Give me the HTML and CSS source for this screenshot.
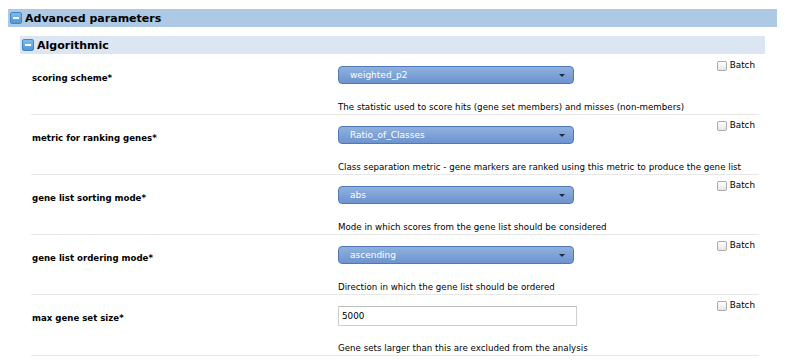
FILE: index.html
```html
<!DOCTYPE html>
<html>
<head>
<meta charset="utf-8">
<title>Advanced parameters</title>
<link rel="stylesheet" href="styles.css">
</head>
<body>
<div class="section-head">
  <span class="toggle"></span><span class="head-text">Advanced parameters</span>
</div>
<div class="group-head">
  <span class="toggle"></span><span class="head-text">Algorithmic</span>
</div>
<div class="params">
  <div class="row">
    <div class="label">scoring scheme*</div>
    <div class="control"><div class="select"><span>weighted_p2</span><span class="arrow"></span></div></div>
    <label class="batch"><input type="checkbox" class="check">Batch</label>
    <div class="desc">The statistic used to score hits (gene set members) and misses (non-members)</div>
  </div>
  <div class="row">
    <div class="label">metric for ranking genes*</div>
    <div class="control"><div class="select"><span>Ratio_of_Classes</span><span class="arrow"></span></div></div>
    <label class="batch"><input type="checkbox" class="check">Batch</label>
    <div class="desc">Class separation metric - gene markers are ranked using this metric to produce the gene list</div>
  </div>
  <div class="row">
    <div class="label">gene list sorting mode*</div>
    <div class="control"><div class="select"><span>abs</span><span class="arrow"></span></div></div>
    <label class="batch"><input type="checkbox" class="check">Batch</label>
    <div class="desc">Mode in which scores from the gene list should be considered</div>
  </div>
  <div class="row">
    <div class="label">gene list ordering mode*</div>
    <div class="control"><div class="select"><span>ascending</span><span class="arrow"></span></div></div>
    <label class="batch"><input type="checkbox" class="check">Batch</label>
    <div class="desc">Direction in which the gene list should be ordered</div>
  </div>
  <div class="row">
    <div class="label">max gene set size*</div>
    <div class="control"><input class="text-input" type="text" value="5000"></div>
    <label class="batch"><input type="checkbox" class="check">Batch</label>
    <div class="desc">Gene sets larger than this are excluded from the analysis</div>
  </div>
</div>
</body>
</html>
```

FILE: styles.css
```css
body {
  margin: 9px 8px 0 8px;
  font-family: "DejaVu Sans", Verdana, sans-serif;
  color: #000;
  background: #fff;
}

.section-head {
  width: 769px;
  height: 18px;
  background: #adc9e4;
  display: flex;
  align-items: center;
  padding-left: 2px;
  box-sizing: border-box;
}

.group-head {
  width: 745px;
  height: 18px;
  margin: 9px 0 0 12px;
  background: #dbe6f2;
  display: flex;
  align-items: center;
  padding-left: 2px;
  box-sizing: border-box;
}

.toggle {
  position: relative;
  width: 10px;
  height: 10px;
  border: 1px solid #3f86c8;
  border-radius: 2px;
  background: linear-gradient(#82b9e8, #4f98d7);
  margin-right: 3px;
  flex: none;
}

.toggle::after {
  content: "";
  position: absolute;
  left: 2px;
  right: 2px;
  top: 4px;
  height: 2px;
  background: #fff;
}

.head-text {
  font-weight: bold;
  font-size: 11px;
  color: #000;
}

.params {
  margin: 1px 0 0 23px;
  width: 728px;
}

.row {
  display: grid;
  grid-template-columns: 307px 1fr auto;
  border-bottom: 1px solid #e8e8e8;
}

.label {
  grid-row: 1;
  grid-column: 1;
  padding: 17px 0 0 1px;
  font-size: 8.6px;
  font-weight: bold;
  line-height: 13px;
  color: #000;
}

.control {
  grid-row: 1;
  grid-column: 2;
  padding-top: 11px;
}

.select {
  position: relative;
  width: 236px;
  height: 18px;
  box-sizing: border-box;
  border: 1px solid #4f78b8;
  border-radius: 4px;
  background: linear-gradient(#8fb1de, #6d93cf);
  color: #fff;
  font-size: 9px;
  line-height: 16px;
  padding-left: 11px;
}

.arrow {
  position: absolute;
  right: 8px;
  top: 7px;
  width: 0;
  height: 0;
  border-left: 3px solid transparent;
  border-right: 3px solid transparent;
  border-top: 3px solid #1b2a48;
}

.text-input {
  display: block;
  width: 239px;
  height: 20px;
  box-sizing: border-box;
  margin: 0;
  border: 1px solid #cfcfcf;
  border-top-color: #bdbdbd;
  padding: 0 0 0 3px;
  font-family: "DejaVu Sans", Verdana, sans-serif;
  font-size: 8.8px;
  color: #000;
  background: #fff;
}

.batch {
  grid-row: 1;
  grid-column: 3;
  padding: 4px 4px 0 0;
  font-size: 8.8px;
  line-height: 13px;
  display: flex;
  align-items: flex-start;
  color: #000;
}

.check {
  appearance: none;
  -webkit-appearance: none;
  width: 10px;
  height: 10px;
  margin: 2px 3px 0 0;
  border: 1px solid #aaa;
  border-radius: 2px;
  background: linear-gradient(#fff, #e6e6e6);
  box-sizing: border-box;
}

.desc {
  grid-row: 2;
  grid-column: 2 / 4;
  margin-top: 16px;
  font-size: 8.7px;
  line-height: 13px;
  color: #000;
}
```
